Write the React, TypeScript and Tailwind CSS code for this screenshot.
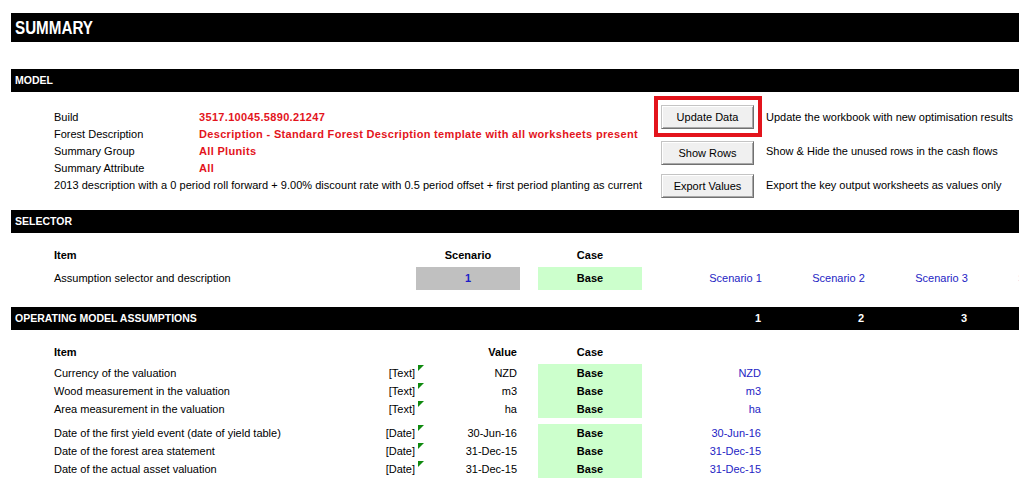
import React from 'react';

const modelRows = [
  { label: 'Build', value: '3517.10045.5890.21247' },
  { label: 'Forest Description', value: 'Description - Standard Forest Description template with all worksheets present' },
  { label: 'Summary Group', value: 'All Plunits' },
  { label: 'Summary Attribute', value: 'All' },
];

const assumptionGroups = [
  [
    { label: 'Currency of the valuation', type: '[Text]', value: 'NZD' },
    { label: 'Wood measurement in the valuation', type: '[Text]', value: 'm3' },
    { label: 'Area measurement in the valuation', type: '[Text]', value: 'ha' },
  ],
  [
    { label: 'Date of the first yield event (date of yield table)', type: '[Date]', value: '30-Jun-16' },
    { label: 'Date of the forest area statement', type: '[Date]', value: '31-Dec-15' },
    { label: 'Date of the actual asset valuation', type: '[Date]', value: '31-Dec-15' },
  ],
];

function Bar({ title, children }: { title: string; children?: React.ReactNode }) {
  return (
    <div className="flex h-[23px] items-center bg-black font-bold text-white">
      <div className="w-[648px] shrink-0 pl-[4px] text-[10.5px]">{title}</div>
      {children}
    </div>
  );
}

function XlButton({ children }: { children: React.ReactNode }) {
  return (
    <div className="flex h-[24px] w-[93px] shrink-0 items-center justify-center border border-[#c4c4c4] border-r-[#707070] border-b-[#707070] bg-[#f0f0f0] shadow-[inset_1px_1px_0_#ffffff,inset_-1px_-1px_0_#a8a8a8]">
      {children}
    </div>
  );
}

export default function App() {
  return (
    <div className="h-[483px] w-[1019px] overflow-hidden bg-white font-['Liberation_Sans',Arial,sans-serif] text-[11px] leading-[17px] text-black">
      <div className="pl-[11px] pt-[13px]">
        {/* Title */}
        <div className="flex h-[29px] items-center bg-black pl-[4px] text-white">
          <span className="origin-left scale-x-[0.8] text-[19px] font-bold leading-none">SUMMARY</span>
        </div>

        {/* Model */}
        <div className="mt-[27px]">
          <Bar title="MODEL" />
        </div>
        <div className="flex h-[118px]">
          <div className="w-[650px] shrink-0 pl-[43px] pt-[17px]">
            {modelRows.map((r) => (
              <div key={r.label} className="flex h-[17px] whitespace-nowrap">
                <div className="w-[145px] shrink-0">{r.label}</div>
                <div className="font-bold tracking-[0.33px] text-[#e3141c]">{r.value}</div>
              </div>
            ))}
            <div className="h-[17px] whitespace-nowrap tracking-[0.03px]">
              2013 description with a 0 period roll forward + 9.00% discount rate with 0.5 period offset + first period planting as current
            </div>
          </div>
          <div className="flex flex-col">
            <div className="mt-[13px] flex items-center">
              <div className="relative">
                <XlButton>Update Data</XlButton>
                <div className="absolute -bottom-[8px] -left-[7px] -right-[8px] -top-[9px] border-4 border-[#e3141c]" />
              </div>
              <span className="ml-[12px] whitespace-nowrap">Update the workbook with new optimisation results</span>
            </div>
            <div className="mt-[12px] flex items-center">
              <XlButton>Show Rows</XlButton>
              <span className="mb-[3px] ml-[12px] whitespace-nowrap">Show &amp; Hide the unused rows in the cash flows</span>
            </div>
            <div className="mt-[9px] flex items-center">
              <XlButton>Export Values</XlButton>
              <span className="mb-[1px] ml-[12px] whitespace-nowrap">Export the key output worksheets as values only</span>
            </div>
          </div>
        </div>

        {/* Selector */}
        <Bar title="SELECTOR" />
        <div className="mt-[14px] flex h-[17px] pl-[43px] font-bold">
          <div className="w-[362px] shrink-0">Item</div>
          <div className="w-[104px] shrink-0 text-center">Scenario</div>
          <div className="w-[18px] shrink-0" />
          <div className="w-[104px] shrink-0 text-center">Case</div>
        </div>
        <div className="mt-[3px] flex h-[23px] items-center whitespace-nowrap pl-[43px] leading-[23px]">
          <div className="w-[362px] shrink-0">Assumption selector and description</div>
          <div className="w-[104px] shrink-0 bg-[#c0c0c0] text-center font-bold text-[#1c1cc8]">1</div>
          <div className="w-[18px] shrink-0" />
          <div className="w-[104px] shrink-0 bg-[#ccffcc] text-center font-bold">Base</div>
          <div className="w-[42px] shrink-0" />
          {['Scenario 1', 'Scenario 2', 'Scenario 3', 'Scenario 4'].map((s) => (
            <div key={s} className="w-[103px] shrink-0 text-center text-[#2424c4]">
              {s}
            </div>
          ))}
        </div>

        {/* Operating model assumptions */}
        <div className="mt-[17px]">
          <Bar title="OPERATING MODEL ASSUMPTIONS">
            {['1', '2', '3'].map((n) => (
              <div key={n} className="w-[103px] shrink-0 pr-[1px] text-right text-[11px]">
                {n}
              </div>
            ))}
          </Bar>
        </div>
        <div className="mt-[14px] flex h-[17px] pl-[43px] font-bold">
          <div className="w-[361px] shrink-0">Item</div>
          <div className="w-[102px] shrink-0 text-right">Value</div>
          <div className="w-[21px] shrink-0" />
          <div className="w-[104px] shrink-0 text-center">Case</div>
        </div>
        {assumptionGroups.map((group, gi) => (
          <div key={gi} className={gi === 0 ? 'mt-[3px]' : 'mt-[6px]'}>
            {group.map((r) => (
              <div key={r.label} className="flex h-[18px] whitespace-nowrap pl-[43px] leading-[18px]">
                <div className="w-[300px] shrink-0">{r.label}</div>
                <div className="w-[61px] shrink-0 text-right">{r.type}</div>
                <div className="relative w-[102px] shrink-0 text-right">
                  <span className="absolute left-[3px] top-[1px] h-0 w-0 border-r-[6px] border-t-[6px] border-r-transparent border-t-[#108a10]" />
                  {r.value}
                </div>
                <div className="w-[21px] shrink-0" />
                <div className="w-[104px] shrink-0 bg-[#ccffcc] text-center font-bold">Base</div>
                <div className="w-[119px] shrink-0 text-right text-[#2424c4]">{r.value}</div>
              </div>
            ))}
          </div>
        ))}
      </div>
    </div>
  );
}
